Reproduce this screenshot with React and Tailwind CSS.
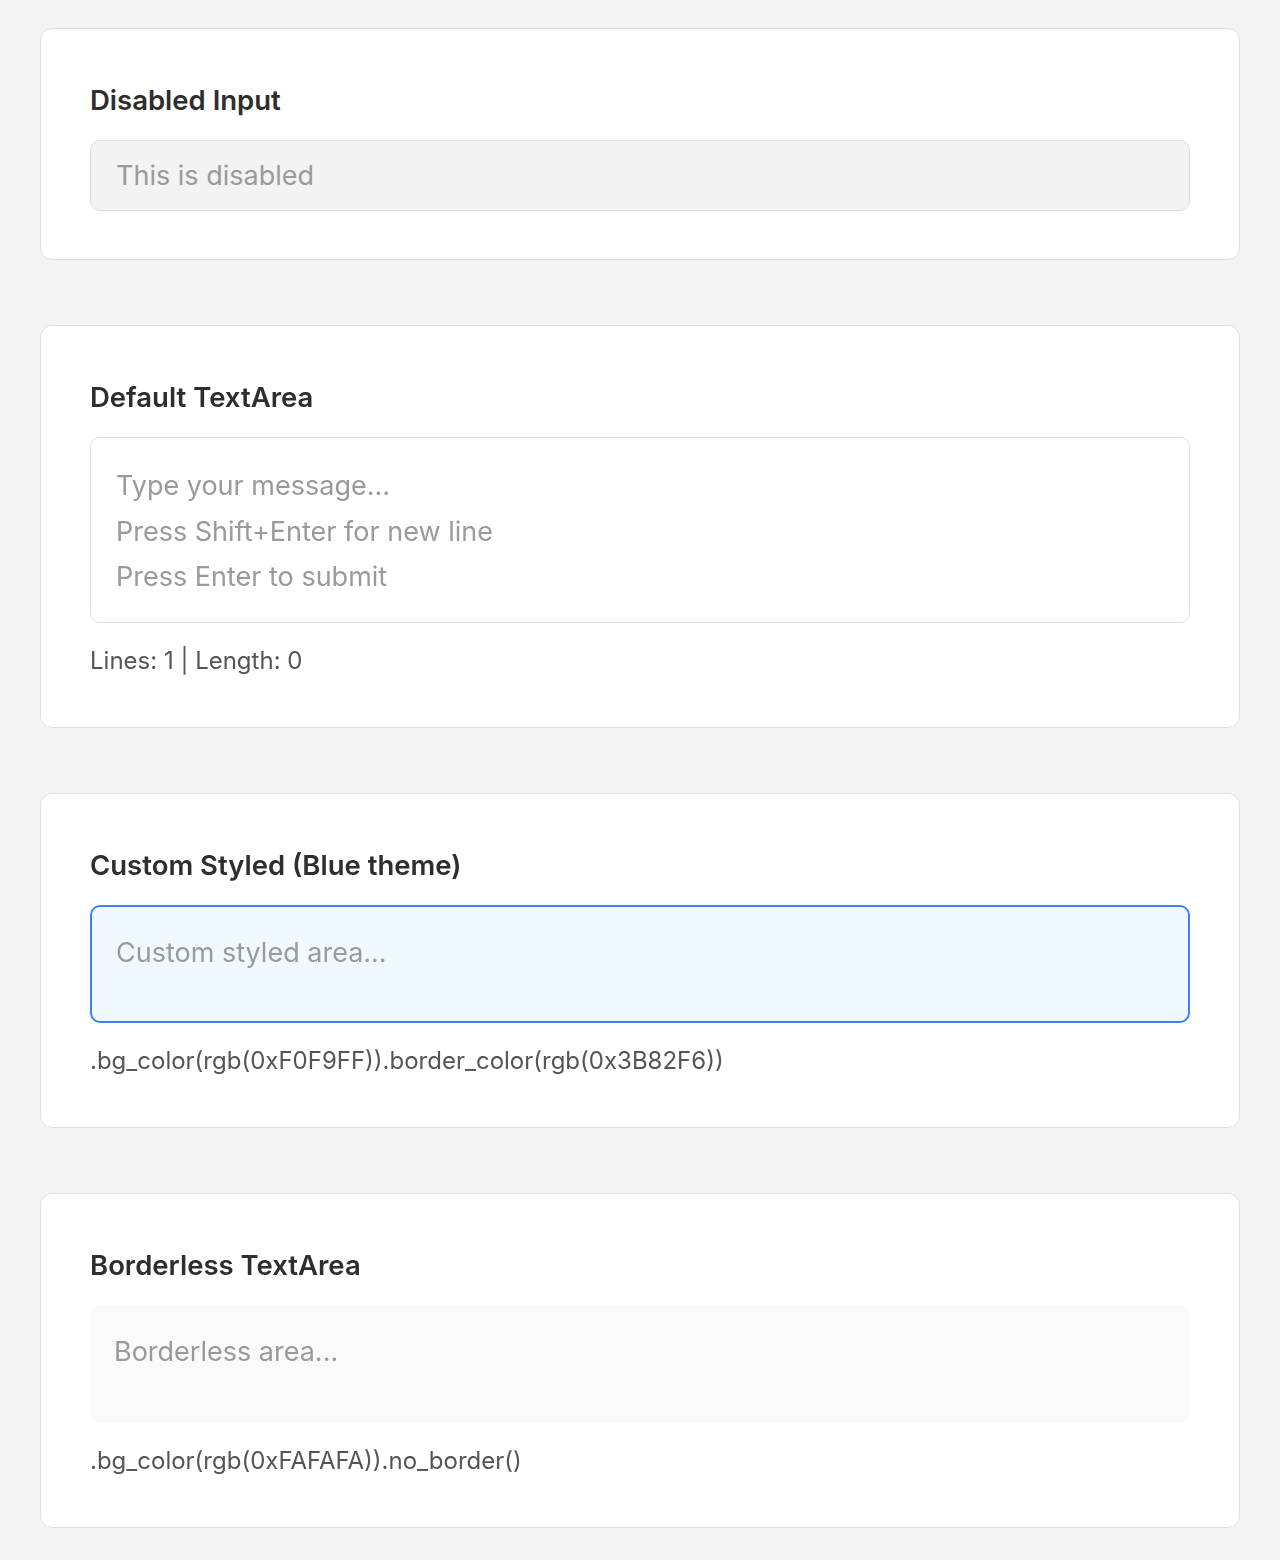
import React from 'react'

const font = { fontFamily: 'Inter, "Noto Sans", sans-serif' }

const Card = ({ title, children }) => (
  <div className="bg-white border border-[#e0e0e0] rounded-[12px] px-[49px] pt-[48px] pb-[48px]">
    <h3 className="text-[27.5px] leading-[46px] font-semibold text-[#2e2e2e] mb-[17px]">{title}</h3>
    {children}
  </div>
)

const Caption = ({ children }) => (
  <p className="text-[24px] leading-[36px] text-[#555] mt-[20px]">{children}</p>
)

export default function App() {
  return (
    <div className="min-h-[1560px] bg-[#f4f4f4] px-[40px] pt-[28px] pb-[32px] flex flex-col gap-[65px]" style={font}>
      {/* Disabled input */}
      <Card title="Disabled Input">
        <input
          disabled
          readOnly
          value="This is disabled"
          className="w-full h-[71px] rounded-[10px] border border-[#dedede] bg-[#f3f3f3] px-[25px] text-[27px] text-[#9a9a9a] outline-none"
        />
      </Card>

      {/* Default */}
      <Card title="Default TextArea">
        <textarea
          placeholder={'Type your message...\nPress Shift+Enter for new line\nPress Enter to submit'}
          className="block w-full h-[186px] resize-none rounded-[10px] border border-[#dedede] bg-white px-[25px] py-[25px] text-[27px] leading-[45.5px] text-[#333] placeholder:text-[#9a9a9a] outline-none"
        />
        <Caption>Lines: 1 | Length: 0</Caption>
      </Card>

      {/* Custom */}
      <Card title="Custom Styled (Blue theme)">
        <textarea
          placeholder="Custom styled area..."
          className="block w-full h-[118px] resize-none rounded-[10px] border-2 border-[#3B82F6] bg-[#F0F9FF] px-[24px] py-[23px] text-[27px] leading-[45.5px] text-[#333] placeholder:text-[#9a9a9a] outline-none"
        />
        <Caption>.bg_color(rgb(0xF0F9FF)).border_color(rgb(0x3B82F6))</Caption>
      </Card>

      {/* Borderless */}
      <Card title="Borderless TextArea">
        <textarea
          placeholder="Borderless area..."
          className="block w-full h-[118px] resize-none rounded-[10px] bg-[#FAFAFA] px-[24px] py-[24px] text-[27px] leading-[45.5px] text-[#333] placeholder:text-[#9a9a9a] outline-none"
        />
        <Caption>.bg_color(rgb(0xFAFAFA)).no_border()</Caption>
      </Card>
    </div>
  )
}
